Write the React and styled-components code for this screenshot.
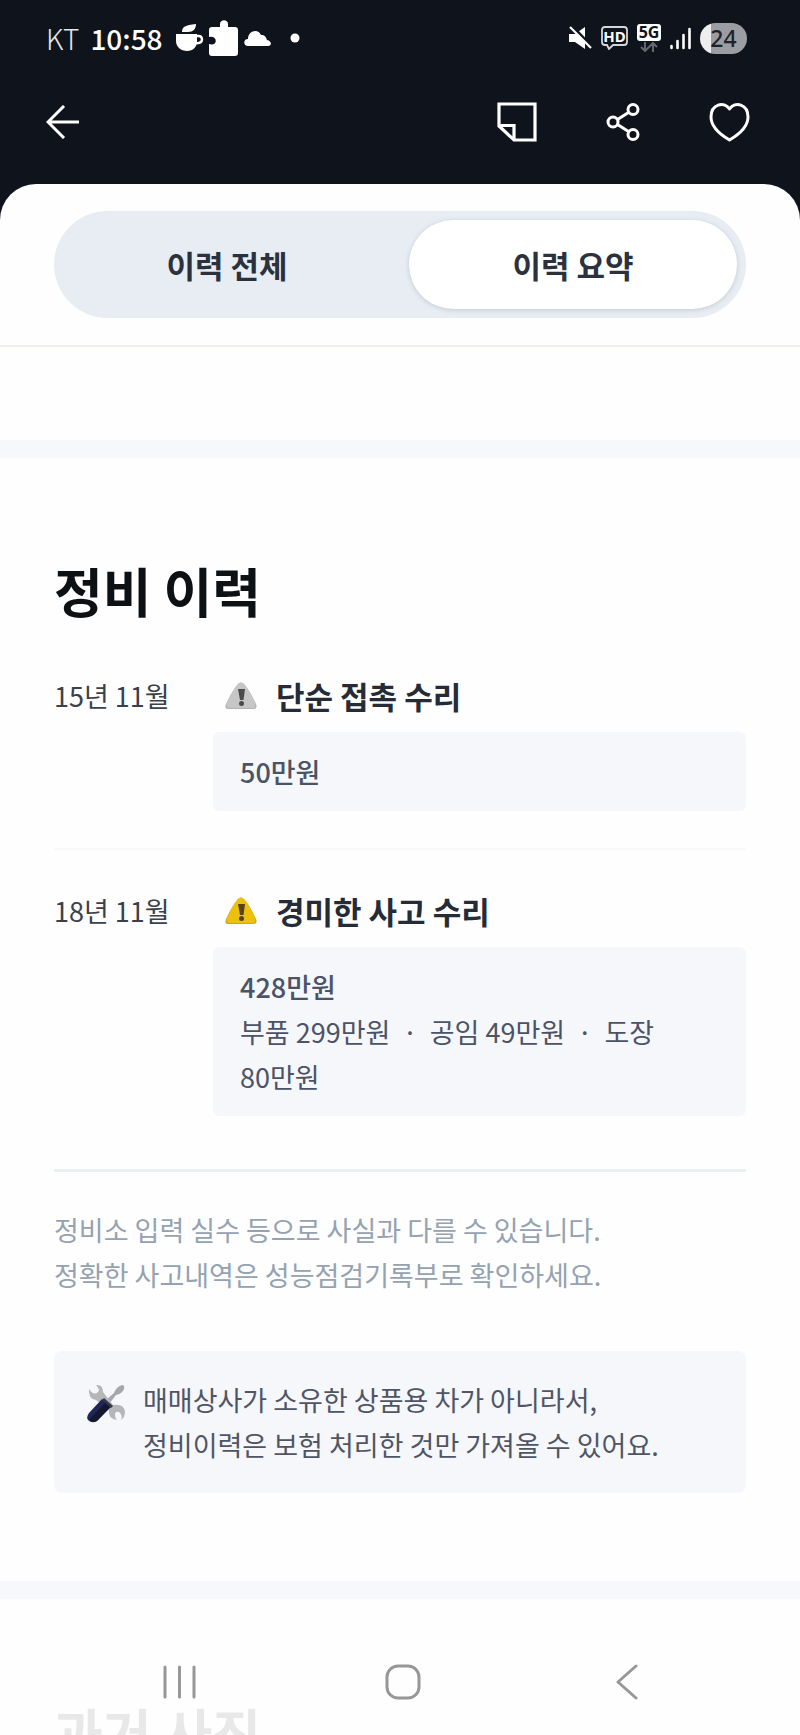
// src/App.jsx
import React, { useState } from 'react';
import styled, { createGlobalStyle } from 'styled-components';

const GlobalStyle = createGlobalStyle`
  * {
    box-sizing: border-box;
  }

  body {
    margin: 0;
    background-color: #0f131b;
    font-family: 'Noto Sans CJK KR', 'Noto Sans', sans-serif;
  }

  button {
    border: none;
    padding: 0;
    background: none;
    font-family: inherit;
    cursor: pointer;
  }

  svg {
    display: block;
    flex: none;
  }
`;

const Screen = styled.div`
  display: flex;
  flex-direction: column;
  height: 100vh;
  overflow: hidden;
  background-color: #0f131b;
`;

const StatusBar = styled.div`
  display: flex;
  justify-content: space-between;
  align-items: center;
  flex: none;
  height: 76px;
  padding: 0 53px 0 46px;
  color: white;
`;

const StatusGroup = styled.div`
  display: flex;
  align-items: center;
  gap: ${props => props.$gap}px;
`;

const Carrier = styled.span`
  margin-right: 6px;
  font-size: 28px;
  font-weight: 300;
  color: #e4e5e8;
`;

const Clock = styled.span`
  margin-right: 8px;
  font-size: 28px;
  font-weight: 500;
`;

const Network = styled.div`
  display: flex;
  flex-direction: column;
  align-items: center;
  gap: 1px;
`;

const NetworkLabel = styled.span`
  width: 24px;
  border-radius: 3px;
  background-color: white;
  color: #0f131b;
  font-family: 'Noto Sans', sans-serif;
  font-size: 16px;
  font-weight: 700;
  line-height: 17px;
  text-align: center;
`;

const Battery = styled.span`
  width: 47px;
  height: 31px;
  border-radius: 16px;
  background: linear-gradient(to right, #eeeeef 24%, #9c9da2 24%);
  color: #20232b;
  font-family: 'Noto Sans', sans-serif;
  font-size: 23px;
  font-weight: 500;
  line-height: 31px;
  text-align: center;
`;

const Toolbar = styled.header`
  display: flex;
  justify-content: space-between;
  align-items: center;
  flex: none;
  height: 108px;
  padding: 0 50px 16px 46px;
`;

const Actions = styled.div`
  display: flex;
  align-items: center;
  gap: 69px;
`;

const Sheet = styled.main`
  flex: 1;
  min-height: 0;
  overflow: hidden;
  border-radius: 36px 36px 0 0;
  background-color: #fefefe;
`;

const TabArea = styled.div`
  padding: 27px 54px;
  border-bottom: 2px solid #efefec;
`;

const Tabs = styled.div`
  display: flex;
  gap: 18px;
  height: 107px;
  padding: 9px;
  border-radius: 54px;
  background-color: #e8edf3;
`;

const Tab = styled.button`
  flex: 1;
  border-radius: 45px;
  font-size: 31px;
  font-weight: 700;
  color: #2b323e;
  background-color: ${props => (props.$active ? 'white' : 'transparent')};
  box-shadow: ${props => (props.$active ? '0 1px 5px rgba(60, 80, 95, 0.22)' : 'none')};
`;

const Spacer = styled.div`
  height: 93px;
`;

const Band = styled.div`
  height: 18px;
  background-color: #f6f8fb;
`;

const Section = styled.section`
  padding: 102px 54px 88px;
`;

const Title = styled.h2`
  margin: 0 0 53px;
  font-size: 53px;
  font-weight: 700;
  line-height: 60px;
  color: #0e1114;
`;

const HistoryList = styled.ul`
  margin: 0;
  padding: 0 0 53px;
  list-style: none;
  border-bottom: 3px solid #ebeff2;
`;

const HistoryItem = styled.li`
  display: grid;
  grid-template-columns: 159px 1fr;

  & + & {
    margin-top: 37px;
    padding-top: 38px;
    border-top: 2px solid #f8f9fb;
  }
`;

const DateText = styled.span`
  font-size: 27px;
  line-height: 45px;
  color: #3a414a;
`;

const RepairName = styled.h3`
  display: flex;
  align-items: center;
  gap: 19px;
  margin: 0 0 14px;
  padding-left: 12px;
  font-size: 31px;
  font-weight: 700;
  line-height: 45px;
  color: #262c37;
`;

const CostBox = styled.div`
  padding: 17px 27px;
  border-radius: 6px;
  background-color: #f5f7fb;
  color: #4c5366;
  font-size: 27px;
  line-height: 45px;

  p {
    margin: 0;
    word-break: keep-all;
    white-space: pre-wrap;
  }

  .total {
    font-weight: 500;
  }
`;

const Caution = styled.p`
  margin: 35px 0 54px;
  font-size: 27px;
  line-height: 45px;
  color: #94a2b1;
`;

const Notice = styled.div`
  display: flex;
  gap: 16px;
  padding: 26px 32px;
  border-radius: 8px;
  background-color: #f5f7fb;

  svg {
    margin-top: 6px;
  }

  p {
    margin: 0;
    font-size: 27px;
    line-height: 45px;
    color: #4f5565;
  }
`;

const SystemNav = styled.nav`
  position: fixed;
  left: 0;
  right: 0;
  bottom: 0;
  display: grid;
  grid-template-columns: repeat(3, 1fr);
  height: 106px;
  padding: 0 61px 0 67px;
  background-color: rgba(254, 254, 254, 0.91);

  button {
    display: flex;
    justify-content: center;
    align-items: center;
  }
`;

const CupIcon = () => (
  <svg width="28" height="28" viewBox="0 0 28 28" fill="white">
    <path d="M6 8C6 3 9 1 20 0C20 5 17 8 12 8Z" />
    <path d="M0 10H21V17C21 23 17 27 11 27S0 23 0 17Z" />
    <path d="M20 12H22.5C25 12 26 13 26 15.500S24 19.500 19 19.500" fill="none" stroke="white" strokeWidth="2.400" />
  </svg>
);

const PuzzleIcon = () => (
  <svg width="30" height="36" viewBox="0 0 30 36" fill="white">
    <path d="M3 7H11V4C11 -1 19 -1 19 4V7H26Q29 7 29 10V33Q29 36 26 36H3Q0 36 0 33V24C9 27 9 15 0 17V10Q0 7 3 7Z" />
  </svg>
);

const CloudIcon = () => (
  <svg width="27" height="15" viewBox="0 0 27 15" fill="white">
    <path d="M4 15C-1 15 -1 8 4 8C4 0 14 -3 17 4C21 4 22 6 23 9C28 10 28 15 24 15Z" />
  </svg>
);

const DotIcon = () => (
  <svg width="28" height="10" viewBox="0 0 28 10" fill="white">
    <circle cx="19" cy="5" r="4.500" />
  </svg>
);

const MuteIcon = () => (
  <svg width="23" height="24" viewBox="0 0 23 24">
    <path d="M0 8H6L16 1V23L6 16H0Z" fill="white" />
    <path d="M3 0L24 22" stroke="#0f131b" strokeWidth="3" />
    <path d="M1 1L22 22" stroke="white" strokeWidth="2.200" />
  </svg>
);

const HdIcon = () => (
  <svg width="27" height="24" viewBox="0 0 27 24">
    <path d="M4 1H23Q26 1 26 4V16Q26 19 23 19H12L8 23L6 19H4Q1 19 1 16V4Q1 1 4 1Z" fill="none" stroke="#d5d6d9" strokeWidth="1.800" />
    <text x="13.500" y="16" textAnchor="middle" fontFamily="Noto Sans, sans-serif" fontSize="15" fontWeight="700" fill="white">HD</text>
  </svg>
);

const DataArrows = () => (
  <svg width="18" height="10" viewBox="0 0 18 10" fill="none" stroke="#63666d" strokeWidth="2">
    <path d="M5 0V9M1 5L5 9L9 5M13 10V1M9 5L13 1L17 5" />
  </svg>
);

const SignalIcon = () => (
  <svg width="21" height="23" viewBox="0 0 21 23" stroke="white" strokeWidth="2.600" strokeLinecap="round">
    <path d="M1.500 19V21M7.500 14V21M13.500 8V21M19.500 2V21" />
  </svg>
);

const ArrowLeftIcon = () => (
  <svg width="33" height="34" viewBox="0 0 33 34" fill="none" stroke="white" strokeWidth="3">
    <path d="M33 17H2M18 1L2 17L18 33" />
  </svg>
);

const NoteIcon = () => (
  <svg width="40" height="40" viewBox="0 0 40 40" fill="none" stroke="white" strokeWidth="3.200">
    <path d="M2 2H38V38H17L2 24Z" />
    <path d="M2 23.500H17V38" />
  </svg>
);

const ShareIcon = () => (
  <svg width="34" height="38" viewBox="0 0 34 38" fill="none" stroke="white" strokeWidth="3">
    <circle cx="27" cy="6.500" r="5" />
    <circle cx="7" cy="19" r="5" />
    <circle cx="27" cy="31.500" r="5" />
    <path d="M11.500 16.500L22.500 9.500M11.500 21.500L22.500 28.500" />
  </svg>
);

const HeartIcon = () => (
  <svg width="41" height="40" viewBox="0 0 41 40" fill="none" stroke="white" strokeWidth="3" strokeLinejoin="round">
    <path d="M20.500 7C15 -1 2 2 2 15C2 26 12 33 20.500 38C29 33 39 26 39 15C39 2 26 -1 20.500 7Z" />
  </svg>
);

const WarningIcon = ({ fill, edge, mark }) => (
  <svg width="32" height="28" viewBox="0 0 32 28">
    <path d="M13 2Q16 -1 19 2Q25 9 31 22Q33 27 28 27H4Q-1 27 1 22Q7 9 13 2Z" fill={edge} />
    <path d="M13 2Q16 -1 19 2Q25 9 30 21Q31 26 28 26H5Q1 26 2 21Q7 9 13 2Z" fill={fill} />
    <path d="M13 7H20L18.500 18H15Z" fill={mark} />
    <circle cx="16.500" cy="21.500" r="2.500" fill={mark} />
  </svg>
);

const ToolsIcon = () => (
  <svg width="41" height="40" viewBox="0 0 41 40">
    <path d="M20 17L28 10Q30 4 36 2Q39 2 38 6Q36 11 30 12L23 21Z" fill="#a5a7ac" />
    <path d="M10 2Q17 1 17 9L27 22Q38 20 39 29Q39 34 35 37Q37 32 33 29Q29 28 29 32Q29 35 31 37Q22 36 23 27L10 17Q2 16 3 6Q7 12 11 10Q15 7 10 2Z" fill="#b5b6b8" />
    <path d="M16 16L25 24L11 38Q6 41 2 37Q0 34 3 30Z" fill="#1e2655" />
    <path d="M20 19L24 24L11 38Q6 40 3 37Z" fill="#14172d" />
    <path d="M17 16L26 24" stroke="#34364a" strokeWidth="3" />
  </svg>
);

const RecentsIcon = () => (
  <svg width="33" height="34" viewBox="0 0 33 34" stroke="#979797" strokeWidth="3" strokeLinecap="round">
    <path d="M2 2V32M16.500 2V32M31 2V32" />
  </svg>
);

const HomeIcon = () => (
  <svg width="36" height="36" viewBox="0 0 36 36" fill="none" stroke="#979797" strokeWidth="3">
    <rect x="2" y="2" width="32" height="32" rx="11" />
  </svg>
);

const BackIcon = () => (
  <svg width="22" height="36" viewBox="0 0 22 36" fill="none" stroke="#979797" strokeWidth="3" strokeLinecap="round" strokeLinejoin="round">
    <path d="M20 2L2 18L20 34" />
  </svg>
);

const colors = {
  simple: { fill: '#c6c6c6', edge: '#b4b4b4', mark: '#4a4a4a' },
  minor: { fill: '#ecc00e', edge: '#d9a413', mark: '#55421b' },
};

const repairs = [
  { id: 1, date: '15년 11월', name: '단순 접촉 수리', level: 'simple', total: '50만원' },
  {
    id: 2,
    date: '18년 11월',
    name: '경미한 사고 수리',
    level: 'minor',
    total: '428만원',
    detail: '부품 299만원  ·  공임 49만원  ·  도장 80만원',
  },
];

const tabs = ['이력 전체', '이력 요약'];

const App = () => {
  const [activeTab, setActiveTab] = useState('이력 요약');

  return (
    <Screen>
      <GlobalStyle />
      <StatusBar>
        <StatusGroup $gap={5}>
          <Carrier>KT</Carrier>
          <Clock>10:58</Clock>
          <CupIcon />
          <PuzzleIcon />
          <CloudIcon />
          <DotIcon />
        </StatusGroup>
        <StatusGroup $gap={9}>
          <MuteIcon />
          <HdIcon />
          <Network>
            <NetworkLabel>5G</NetworkLabel>
            <DataArrows />
          </Network>
          <SignalIcon />
          <Battery>24</Battery>
        </StatusGroup>
      </StatusBar>

      <Toolbar>
        <button type="button" aria-label="뒤로"><ArrowLeftIcon /></button>
        <Actions>
          <button type="button" aria-label="메모"><NoteIcon /></button>
          <button type="button" aria-label="공유"><ShareIcon /></button>
          <button type="button" aria-label="찜하기"><HeartIcon /></button>
        </Actions>
      </Toolbar>

      <Sheet>
        <TabArea>
          <Tabs>
            {tabs.map(tab => (
              <Tab
                key={tab}
                type="button"
                $active={tab === activeTab}
                aria-pressed={tab === activeTab}
                onClick={() => setActiveTab(tab)}
              >
                {tab}
              </Tab>
            ))}
          </Tabs>
        </TabArea>
        <Spacer />
        <Band />

        <Section>
          <Title>정비 이력</Title>
          <HistoryList>
            {repairs.map(repair => (
              <HistoryItem key={repair.id}>
                <DateText>{repair.date}</DateText>
                <div>
                  <RepairName>
                    <WarningIcon {...colors[repair.level]} />
                    {repair.name}
                  </RepairName>
                  <CostBox>
                    <p className="total">{repair.total}</p>
                    {repair.detail && <p>{repair.detail}</p>}
                  </CostBox>
                </div>
              </HistoryItem>
            ))}
          </HistoryList>
          <Caution>
            정비소 입력 실수 등으로 사실과 다를 수 있습니다.
            <br />
            정확한 사고내역은 성능점검기록부로 확인하세요.
          </Caution>
          <Notice>
            <ToolsIcon />
            <p>
              매매상사가 소유한 상품용 차가 아니라서,
              <br />
              정비이력은 보험 처리한 것만 가져올 수 있어요.
            </p>
          </Notice>
        </Section>
        <Band />

        <Section>
          <Title>과거 사진</Title>
        </Section>
      </Sheet>

      <SystemNav>
        <button type="button" aria-label="최근 앱"><RecentsIcon /></button>
        <button type="button" aria-label="홈"><HomeIcon /></button>
        <button type="button" aria-label="이전"><BackIcon /></button>
      </SystemNav>
    </Screen>
  );
};

export default App;
